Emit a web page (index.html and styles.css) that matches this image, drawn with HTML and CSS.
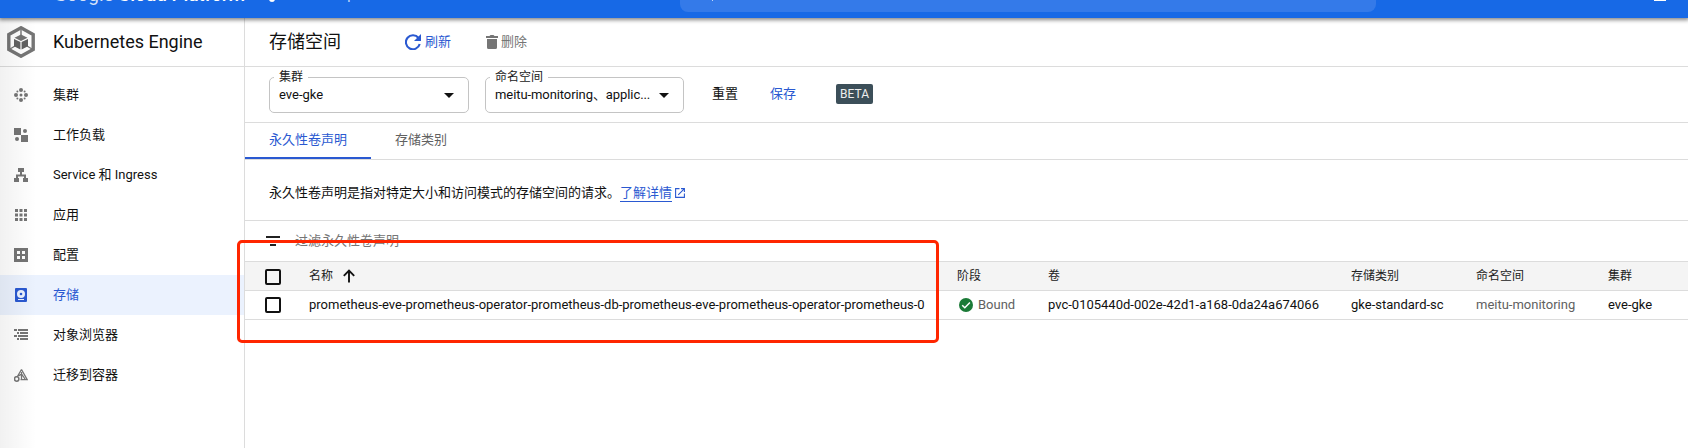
FILE: index.html
```
<!DOCTYPE html>
<html lang="zh-CN">
<head>
<meta charset="utf-8">
<title>Kubernetes Engine</title>
<link rel="stylesheet" href="styles.css">
</head>
<body>
<div class="app">
  <header class="topbar">
    <div class="brand"><span class="brand-light">Google</span> <b>Cloud Platform</b></div>
    <svg class="project-icon" width="16" height="16" viewBox="0 0 16 16" fill="#fff"><circle cx="4" cy="4" r="2.5"/><circle cx="12" cy="4" r="2.5"/><circle cx="8" cy="12" r="3"/></svg>
    <div class="project">meitu-op</div>
    <div class="search"><svg width="16" height="16" viewBox="0 0 16 16" fill="none" stroke="#fff"><circle cx="6" cy="6" r="4"/><path d="M9 9l5 5"/></svg></div>
    <div class="shell"></div>
  </header>
  <div class="columns">
    <nav class="sidebar">
      <div class="product">
        <svg width="28" height="32" viewBox="0 0 28 32"><path d="M14 1.8 26.2 8.6V23.4L14 30.2 1.8 23.4V8.6Z" fill="none" stroke="#757575" stroke-width="3.4"/><path d="M14 4v5M3 23l5-3M25 23l-5-3" stroke="#757575" stroke-width="1.4"/><path d="M14 8.5 20.5 11.700 14 15 7.500 11.700Z" fill="#757575"/><path d="M7 13 13.400 16V23.500L7 20.300ZM21 13 14.600 16V23.500L21 20.300Z" fill="#616161"/></svg>
        <span>Kubernetes Engine</span>
      </div>
      <ul class="nav">
        <li><svg viewBox="0 0 14 14"><circle cx="7" cy="2" r="2"/><circle cx="7" cy="12" r="2"/><circle cx="2" cy="7" r="2"/><circle cx="12" cy="7" r="2"/><circle cx="7" cy="7" r="1.500"/><circle cx="3.400" cy="3.400" r="1"/><circle cx="10.600" cy="3.400" r="1"/><circle cx="3.400" cy="10.600" r="1"/><circle cx="10.600" cy="10.600" r="1"/></svg><span>集群</span></li>
        <li><svg viewBox="0 0 14 14"><path d="M0 0h7v7H0zM7 7h7v7H7z"/><circle cx="11" cy="3" r="2"/><circle cx="3" cy="11" r="2"/></svg><span>工作负载</span></li>
        <li><svg viewBox="0 0 14 14"><path d="M4 0h6v4H4zM0 10h5v4H0zM9 10h5v4H9zM6 4h2v2.500h4V10h-2V8.500H4V10H2V6.500h4z"/></svg><span>Service 和 Ingress</span></li>
        <li><svg viewBox="0 0 14 14"><path d="M1 1h3v3H1zM5.500 1h3v3h-3zM10 1h3v3h-3zM1 5.500h3v3H1zM5.500 5.500h3v3h-3zM10 5.500h3v3h-3zM1 10h3v3H1zM5.500 10h3v3h-3zM10 10h3v3h-3z"/></svg><span>应用</span></li>
        <li><svg viewBox="0 0 14 14"><path fill-rule="evenodd" d="M0 0h14v14H0zM3 3v3h3V3zM8 3v3h3V3zM3 8v3h3V8zM8 8v3h3V8z"/></svg><span>配置</span></li>
        <li class="active"><svg viewBox="0 0 14 14"><path fill-rule="evenodd" d="M2 0h10a1 1 0 0 1 1 1v12a1 1 0 0 1-1 1H2a1 1 0 0 1-1-1V1a1 1 0 0 1 1-1zM7 2a4 4 0 1 0 0 8 4 4 0 0 0 0-8zM4 11v1h6v-1z"/><circle cx="7" cy="6" r="1.300"/></svg><span>存储</span></li>
        <li><svg viewBox="0 0 14 14"><path d="M0 1h3v2H0zM4 1h10v2H4zM3 4h2v2H3zM6 4h8v2H6zM0 7h3v2H0zM4 7h10v2H4zM3 10h2v2H3zM6 10h8v2H6z"/></svg><span>对象浏览器</span></li>
        <li><svg viewBox="0 0 14 14"><path d="M7.500 1.500 2.500 10M7.500 1.500l5.700 10.200H6.500M7.500 4v7M4.500 8l3-2 3.500 5" fill="none" stroke="#757575" stroke-width="1.300"/><circle cx="2.700" cy="11" r="2.200" fill="#fff" stroke="#757575" stroke-width="1.500"/></svg><span>迁移到容器</span></li>
      </ul>
    </nav>
    <main class="main">
      <div class="titlebar">
        <h1>存储空间</h1>
        <div class="action refresh"><svg width="16" height="16" viewBox="0 0 16 16"><path d="M13.500 4A7 7 0 1 0 14.700 10" fill="none" stroke="#2a59d1" stroke-width="2.100"/><path d="M16 0v7H9z" fill="#2a59d1"/></svg><span>刷新</span></div>
        <div class="action delete"><svg width="12" height="14" viewBox="0 0 12 14"><path d="M0 1h3.500l1-1h3l1 1H12v2H0zM1 4h10v8.500a1.500 1.500 0 0 1-1.500 1.500h-7A1.500 1.500 0 0 1 1 12.500z" fill="#757575"/></svg><span>删除</span></div>
      </div>
      <div class="filters">
        <fieldset class="select"><legend>集群</legend><div><span>eve-gke</span><i class="caret"></i></div></fieldset>
        <fieldset class="select namespace"><legend>命名空间</legend><div><span>meitu-monitoring、applic...</span><i class="caret"></i></div></fieldset>
        <span class="reset">重置</span>
        <span class="save">保存</span>
        <span class="beta">BETA</span>
      </div>
      <div class="tabs"><div class="tab selected">永久性卷声明</div><div class="tab">存储类别</div></div>
      <p class="intro"><span>永久性卷声明是指对特定大小和访问模式的存储空间的请求。</span><a>了解详情</a><svg width="10" height="10" viewBox="0 0 10 10" fill="none" stroke="#2a59d1" stroke-width="1.100"><path d="M4.500.6H.6v8.800h8.800V5.500M6 .6h3.400V4M9.200.8 3.200 6.800"/></svg></p>
      <div class="table-filter"><svg width="14" height="10" viewBox="0 0 14 10"><path d="M0 0h14v2H0zM2 4h10v2H2zM4 8h6v2H4z" fill="#212121"/></svg><span>过滤永久性卷声明</span></div>
      <div class="grid-row head">
        <i class="box"></i><span class="sort">名称<svg width="12" height="14" viewBox="0 0 12 14" fill="none" stroke="#111" stroke-width="1.900"><path d="M6 13.500V1.500M.8 6.800 6 1.600l5.200 5.200"/></svg></span><span>阶段</span><span>卷</span><span>存储类别</span><span>命名空间</span><span>集群</span>
      </div>
      <div class="grid-row">
        <i class="box"></i><span class="name">prometheus-eve-prometheus-operator-prometheus-db-prometheus-eve-prometheus-operator-prometheus-0</span><span class="status"><svg width="14" height="14" viewBox="0 0 14 14"><circle cx="7" cy="7" r="7" fill="#1b7a37"/><path d="M3.200 7.200 5.800 9.700 10.900 4.500" fill="none" stroke="#fff" stroke-width="1.500"/></svg>Bound</span><span class="volume">pvc-0105440d-002e-42d1-a168-0da24a674066</span><span>gke-standard-sc</span><span class="muted">meitu-monitoring</span><span>eve-gke</span>
      </div>
    </main>
  </div>
  <div class="edge-shade"></div>
  <div class="highlight"></div>
</div>
</body>
</html>
```
FILE: styles.css
```
* { box-sizing: border-box; }
body { margin: 0; background: #fff; color: #111; font: 13px/20px Roboto, "Noto Sans CJK SC", sans-serif; }
svg { display: block; flex: none; }
.app { position: relative; width: 1688px; height: 448px; overflow: hidden; display: flex; flex-direction: column; }
.topbar { height: 18px; flex: none; background: #1769e6; display: flex; align-items: flex-start; color: #fff; box-shadow: 0 1px 4px 1px rgba(0,0,0,.48); padding-left: 54px; z-index: 1; white-space: nowrap; }
.brand { width: 210px; margin-top: -17px; font-size: 19px; line-height: 24px; letter-spacing: -.1px; }
.brand-light { opacity: .82; }
.brand b { font-weight: 500; }
.project-icon { margin-top: -13px; margin-right: 20px; }
.project { width: 380px; margin-top: -16px; font-size: 14px; opacity: .75; }
.search { width: 696px; height: 12px; background: #347ae9; border-radius: 0 0 8px 8px; padding-left: 19px; }
.search svg { margin-top: -13px; opacity: .7; }
.shell { width: 12px; height: 1px; background: #fff; margin-left: 278px; }
.columns { display: flex; flex: 1; }
.sidebar { width: 245px; border-right: 1px solid #dcdcdc; }
.product { height: 49px; border-bottom: 1px solid #dcdcdc; display: flex; align-items: center; padding-left: 7px; gap: 18px; font-size: 18px; }
.nav { list-style: none; margin: 8px 0 0; padding: 0; }
.nav li { height: 40px; display: flex; align-items: center; gap: 25px; padding-left: 14px; }
.nav svg { width: 14px; height: 14px; fill: #757575; }
.nav .active { background: #ebf2fe; color: #2a59d1; }
.nav .active svg { fill: #2a59d1; }
.main { flex: 1; min-width: 0; }
.titlebar { height: 49px; border-bottom: 1px solid #dcdcdc; display: flex; align-items: center; padding-left: 24px; }
h1 { margin: 0; width: 136px; font-size: 18px; font-weight: 400; line-height: 24px; }
.action { display: flex; align-items: center; }
.refresh { gap: 4px; width: 81px; color: #2a59d1; }
.delete { gap: 3px; color: #757575; }
.filters { height: 56px; border-bottom: 1px solid #dcdcdc; display: flex; padding: 1px 0 0 24px; }
.select { width: 200px; height: 45px; margin: 0 16px 0 0; padding: 0 14px 0 4px; border: 1px solid #c4c4c4; border-radius: 5px; min-width: 0; }
.select legend { font-size: 12px; line-height: 18px; padding: 0 5px; color: #212121; }
.select div { display: flex; justify-content: space-between; align-items: center; padding-left: 5px; height: 20px; margin-top: -1px; white-space: nowrap; }
.namespace { width: 199px; margin-right: 28px; }
.namespace span { letter-spacing: -.08px; }
.caret { border: 5px solid transparent; border-top-color: #111; border-bottom: 0; }
.reset, .save, .beta { margin-top: 16px; }
.reset { width: 58px; }
.save { width: 66px; color: #2a59d1; }
.beta { width: 37px; height: 20px; background: #3c4f59; color: #eee; border-radius: 2px; text-align: center; font-size: 12px; }
.tabs { height: 37px; border-bottom: 1px solid #dcdcdc; display: flex; }
.tab { padding: 7px 24px; height: 36px; color: #616161; }
.selected { width: 126px; color: #2a59d1; border-bottom: 2px solid #2a59d1; }
.intro { height: 61px; margin: 0; border-bottom: 1px solid #dcdcdc; display: flex; align-items: center; padding: 6px 0 0 24px; }
.intro a { color: #2a59d1; border-bottom: 1px solid #2a59d1; line-height: 17px; }
.intro svg { margin: -1px 0 0 3px; }
.table-filter { height: 40px; display: flex; align-items: center; padding-left: 21px; gap: 15px; color: #757575; }
.grid-row { height: 29px; border-bottom: 1px solid #dcdcdc; display: grid; grid-template-columns: 44px 648px 91px 303px 125px 132px 1fr; align-items: center; padding-left: 20px; white-space: nowrap; }
.head { height: 30px; background: #f4f4f4; border-top: 1px solid #dcdcdc; font-size: 12px; color: #212121; }
.box { width: 16px; height: 16px; border: 2px solid #111; border-radius: 2px; }
.head .box { margin-top: 2px; }
.sort, .status { display: flex; align-items: center; }
.sort svg { margin-left: 10px; }
.status { color: #616161; gap: 5px; padding-left: 2px; }
.muted { color: #616161; }
.edge-shade { position: absolute; left: 0; top: 18px; width: 36px; bottom: 0; background: linear-gradient(to right, rgba(0,0,0,.055), transparent); }
.highlight { position: absolute; left: 237px; top: 240px; width: 702px; height: 103px; border: 3px solid #ff2600; border-radius: 5px; z-index: 2; }
```
